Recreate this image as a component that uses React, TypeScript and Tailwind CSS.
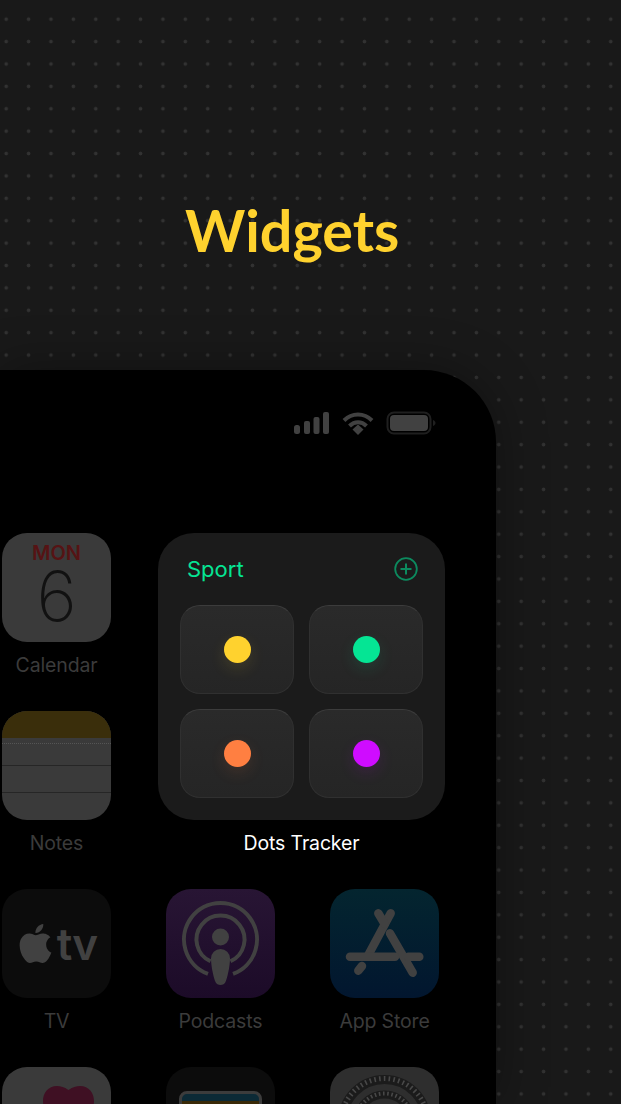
import { SiApple } from 'react-icons/si';

// ================ DATA ================
const dots = [
  'bg-[#ffd22e] shadow-[0_6px_16px_rgba(255,210,46,0.12)]',
  'bg-[#05e594] shadow-[0_6px_16px_rgba(5,229,148,0.12)]',
  'bg-[#ff7f41] shadow-[0_6px_16px_rgba(255,127,65,0.12)]',
  'bg-[#cf0cff] shadow-[0_6px_16px_rgba(207,12,255,0.12)]',
];

// ================ ICONS ================
function SignalIcon() {
  return (
    <svg width="36" height="24" viewBox="0 0 36 24" fill="#414141">
      <rect x="0" y="14" width="6" height="9" rx="2.5" />
      <rect x="10" y="10" width="6" height="13" rx="2" />
      <rect x="19.5" y="6" width="6" height="17" rx="2" />
      <rect x="29" y="1" width="6" height="22" rx="2" />
    </svg>
  );
}

function WifiIcon() {
  return (
    <svg width="32" height="24" viewBox="0 0 32 24" fill="none" stroke="#414141" strokeWidth="4">
      <path d="M2 9.5C10 1.5 22 1.5 30 9.5" />
      <path d="M7.5 15C12.5 10 19.5 10 24.5 15" />
      <path d="M10.5 18.5L16 13.5L21.5 18.5L16 24Z" fill="#414141" stroke="none" />
    </svg>
  );
}

function BatteryIcon() {
  return (
    <svg width="50" height="24" viewBox="0 0 50 24" fill="none">
      <rect x="1.5" y="1.5" width="43" height="21" rx="6.5" stroke="#1f1f1f" strokeWidth="2" />
      <rect x="4" y="4" width="38" height="16" rx="4" fill="#414141" />
      <path d="M47 9C48.5 9.7 49.5 10.7 49.5 12C49.5 13.3 48.5 14.3 47 15Z" fill="#1f1f1f" />
    </svg>
  );
}

function PodcastIcon() {
  return (
    <svg width="109" height="109" viewBox="0 0 109 109" fill="none" stroke="#414141" strokeWidth="4">
      <path d="M42 84.8A36.5 36.5 0 1 1 67 84.8" />
      <path d="M44.5 72.3A24 24 0 1 1 64.5 72.3" />
      <circle cx="54.5" cy="48" r="8.5" fill="#414141" stroke="none" />
      <path d="M45 69.5A9.5 9.5 0 0 1 64 69.5C64 78 61 90 59.5 93C58 97 51 97 49.5 93C48 90 45 78 45 69.5Z" fill="#414141" stroke="none" />
    </svg>
  );
}

function AppStoreIcon() {
  return (
    <svg width="109" height="109" viewBox="0 0 109 109" fill="none" stroke="#414141" strokeWidth="8.5" strokeLinecap="round">
      <path d="M28.3 81.7L32 77" />
      <path d="M38.3 66L60.7 24.3" />
      <path d="M48.3 24.3L54.7 35" />
      <path d="M60 44.3L82.7 83.7" />
      <path d="M20 67.7H65" />
      <path d="M78.3 67.7H89.3" />
    </svg>
  );
}

function GearIcon() {
  return (
    <svg width="109" height="109" viewBox="0 0 109 109" fill="none">
      <circle cx="54.5" cy="54.5" r="42" stroke="#1b1b1b" strokeWidth="9" />
      <circle cx="54.5" cy="54.5" r="43" stroke="#484848" strokeWidth="5" strokeDasharray="1.6 3.2" />
      <circle cx="54.5" cy="54.5" r="27" stroke="#1b1b1b" strokeWidth="8" />
      <circle cx="54.5" cy="54.5" r="28" stroke="#484848" strokeWidth="4" strokeDasharray="1.6 2.6" />
    </svg>
  );
}

// ================ PIECES ================
function AppIcon({ label, className, children }: { label?: string; className: string; children?: React.ReactNode }) {
  return (
    <div className="flex w-[109px] flex-col items-center">
      <div className={`flex h-[109px] w-[109px] shrink-0 items-center justify-center overflow-hidden rounded-[25px] ${className}`}>
        {children}
      </div>
      {label && (
        <span className="mt-[9px] whitespace-nowrap text-[19.5px] leading-[28px] tracking-[-0.15px] text-[#3b3b3b]">{label}</span>
      )}
    </div>
  );
}

function Widget() {
  return (
    <div className="col-span-2 row-span-2 ml-[-1px] mr-[1px] flex flex-col items-center">
      <div className="h-[287px] w-[287px] shrink-0 rounded-[36px] bg-[#1b1b1b] px-[22px] pt-[21px]">
        <div className="flex h-[30px] items-center justify-between pl-[7px] pr-[5px]">
          <span className="text-[22px] leading-[30px] text-[#05e594]">Sport</span>
          <svg width="24" height="24" viewBox="0 0 24 24" fill="none" stroke="#0c8a5e" strokeWidth="1.8">
            <circle cx="12" cy="12" r="10.8" />
            <path d="M12 6.5V17.5M6.5 12H17.5" strokeWidth="2" />
          </svg>
        </div>
        <div className="mt-[21px] grid grid-cols-2 gap-x-[15px] gap-y-[15px]">
          {dots.map((dot) => (
            <div
              key={dot}
              className="flex h-[89px] items-center justify-center rounded-[20px] border border-[#303030] border-t-[#3c3c3c] bg-gradient-to-b from-[#2a2a2a] to-[#252525]"
            >
              <div className={`h-[27px] w-[27px] rounded-full ${dot}`} />
            </div>
          ))}
        </div>
      </div>
      <span className="mt-[9px] whitespace-nowrap text-[19.5px] leading-[28px] tracking-[-0.15px] text-white">Dots Tracker</span>
    </div>
  );
}

// ================ RETURN ================
export default function App() {
  return (
    <div className="h-[1104px] w-[621px] overflow-hidden bg-[#191919] bg-[radial-gradient(circle,#323232_1.5px,transparent_2.2px)] bg-[length:22.4px_22.4px] bg-[position:-5px_8px] font-['Inter','Liberation_Sans',sans-serif]">
      <h1 className="pl-[185px] pt-[195px] font-['Lato',sans-serif] text-[57.5px] font-bold leading-[70px] text-[#ffd22e]">Widgets</h1>

      <div className="mt-[105px] h-[734px] w-[496px] overflow-hidden rounded-tr-[72px] bg-black pl-[2px] pt-[41px] shadow-[0_0_50px_rgba(0,0,0,0.35)]">
        <div className="flex justify-end gap-[12px] pr-[60px]">
          <SignalIcon />
          <WifiIcon />
          <BatteryIcon />
        </div>

        <div className="mt-[98px] grid grid-cols-[109px_109px_109px] gap-x-[55px] gap-y-[32px]">
          <AppIcon label="Calendar" className="flex-col justify-start bg-[#3a3a3a]">
            <span className="mt-[10px] text-[20px] font-semibold leading-[20px] text-[#561314]">MON</span>
            <span className="mt-[8px] text-[69px] font-extralight leading-[50px] text-[#111111]">6</span>
          </AppIcon>

          <Widget />

          <AppIcon label="Notes" className="flex-col justify-start bg-[#3a3a3a]">
            <div className="h-[27px] w-full shrink-0 bg-[#3a2e0b]" />
            <div className="mt-[5px] w-full border-t border-dotted border-[#555555]" />
            <div className="mt-[21px] w-full border-t border-[#262626]" />
            <div className="mt-[26px] w-full border-t border-[#262626]" />
          </AppIcon>

          <AppIcon label="TV" className="bg-[#0c0c0c]">
            <div className="flex items-center text-[#414141]">
              <SiApple size={39} />
              <span className="ml-[2px] text-[44px] font-semibold leading-[46px] tracking-[-1px]">tv</span>
            </div>
          </AppIcon>
          <AppIcon label="Podcasts" className="bg-gradient-to-b from-[#281534] to-[#1c0b28]">
            <PodcastIcon />
          </AppIcon>
          <AppIcon label="App Store" className="bg-gradient-to-b from-[#04252f] to-[#02162f]">
            <AppStoreIcon />
          </AppIcon>

          <AppIcon className="items-start justify-start bg-[#3a3a3a]">
            <svg className="ml-[41px] mt-[19px]" width="51" height="48" viewBox="0 0 51 48" fill="#3f1023">
              <path d="M25.5 4C21 1 18 0 14 0C5 0 0 7 0 15C0 30 17 42 25.5 48C34 42 51 30 51 15C51 7 46 0 37 0C33 0 30 1 25.5 4Z" />
            </svg>
          </AppIcon>
          <AppIcon className="items-start bg-[#0c0c0c]">
            <div className="mt-[24px] h-[60px] w-[83px] shrink-0 overflow-hidden rounded-[8px] border-[3px] border-[#3c3c3c] bg-[#0c2a36]">
              <div className="mt-[7px] h-[40px] bg-[#3a2a08]" />
            </div>
          </AppIcon>
          <AppIcon className="bg-[#2e2e2e]">
            <GearIcon />
          </AppIcon>
        </div>
      </div>
    </div>
  );
}
